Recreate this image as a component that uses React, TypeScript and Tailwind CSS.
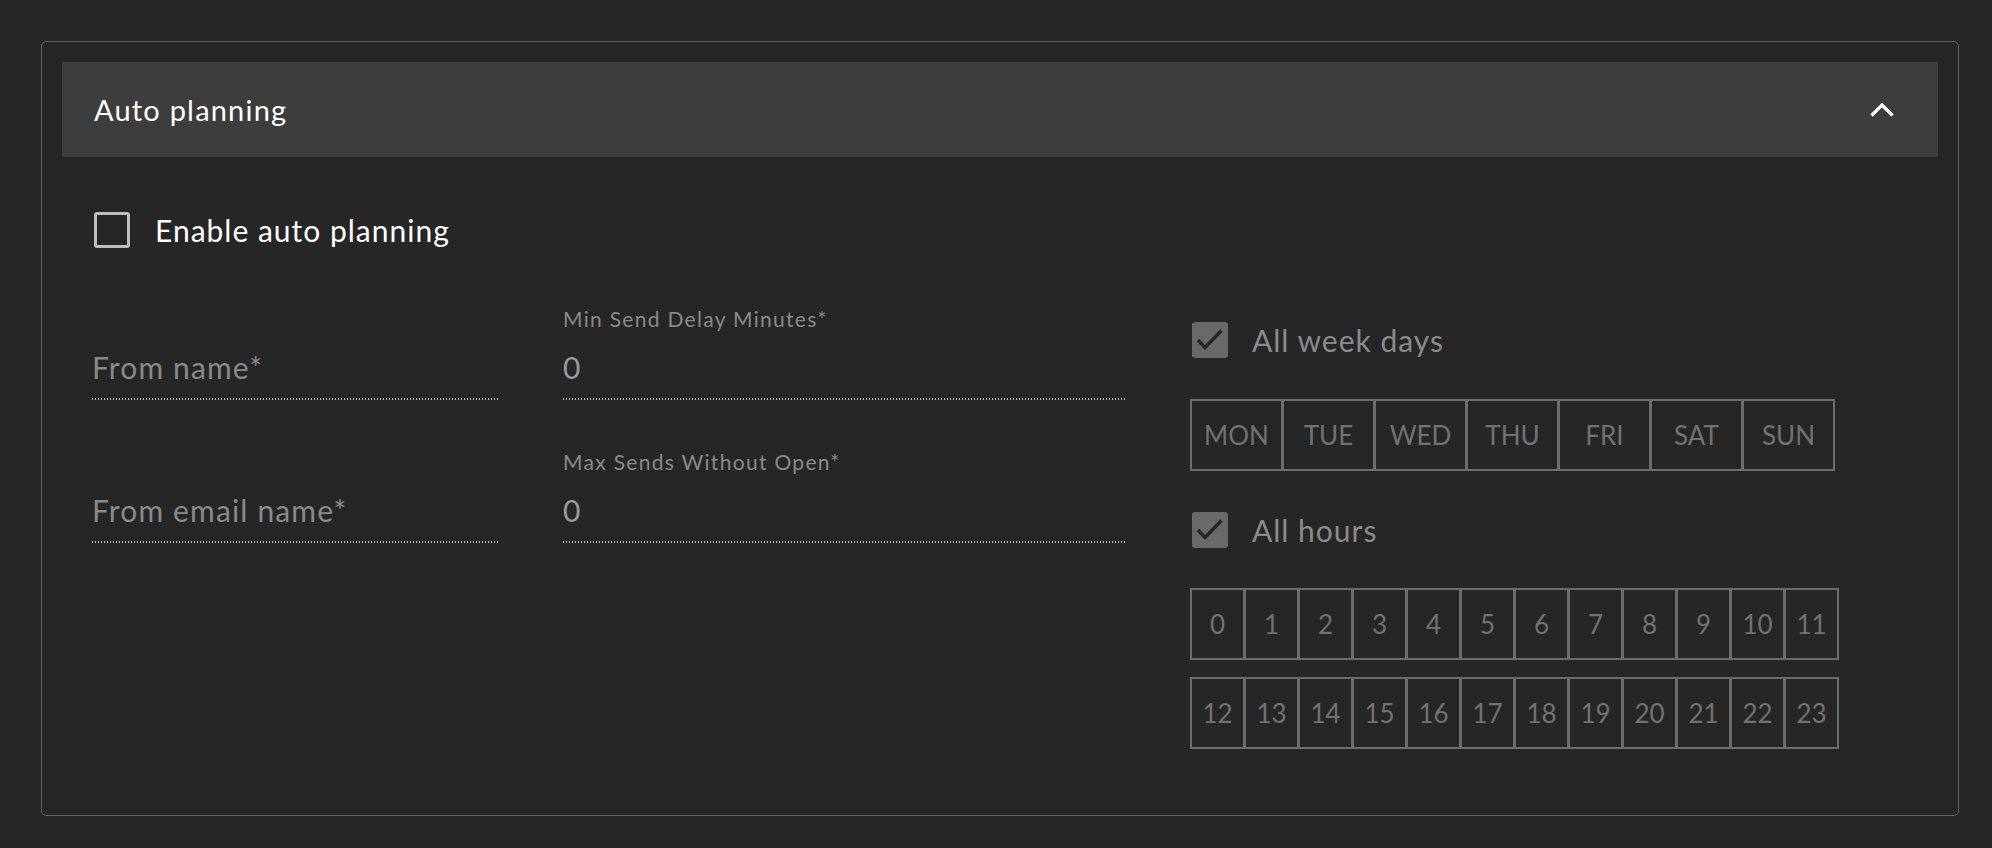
import React from "react";

const FONT = { fontFamily: "Lato, 'Open Sans', sans-serif" };

function Field({ label, value, placeholder }: { label?: string; value?: string; placeholder?: string }) {
  return (
    <div className="flex flex-col">
      <div className="h-[24px] text-[21px] leading-[24px] tracking-[1.3px] text-[#8a8a8a] whitespace-nowrap">{label ?? ""}</div>
      <div
        className={
          "mt-[21px] h-[30px] text-[30px] leading-[30px] tracking-[1.15px] whitespace-nowrap " +
          (value ? "text-[#9a9a9a]" : "text-[#8a8a8a]")
        }
      >
        {value ?? placeholder}
      </div>
      <div className="mt-[16px] h-[2px] w-full bg-[repeating-linear-gradient(90deg,#bdbdbd_0px,#bdbdbd_1px,transparent_1px,transparent_3px)]" />
    </div>
  );
}

function CheckedBox() {
  return (
    <div className="w-[36px] h-[36px] rounded-[3px] bg-[#696969] flex items-center justify-center shrink-0">
      <svg width="36" height="36" viewBox="0 0 36 36">
        <polyline points="6,18 13,25.5 29.5,8.5" fill="none" stroke="#262626" strokeWidth="3.4" />
      </svg>
    </div>
  );
}

export default function App() {
  const days = ["MON", "TUE", "WED", "THU", "FRI", "SAT", "SUN"];
  const row1 = Array.from({ length: 12 }, (_, i) => i);
  const row2 = Array.from({ length: 12 }, (_, i) => i + 12);
  return (
    <div className="w-[1992px] h-[848px] bg-[#262626] pt-[41px] pl-[41px]" style={FONT}>
      <div className="w-[1918px] h-[775px] border border-[#646464] rounded-[5px] p-[20px]">
        <div className="h-[95px] bg-[#3d3d3d] flex items-center justify-between pl-[32px] pr-[44px]">
          <span className="text-[29px] tracking-[1.2px] text-white leading-none">Auto planning</span>
          <svg width="24" height="15" viewBox="0 0 24 15">
            <polyline points="1.5,13.5 12,3 22.5,13.5" fill="none" stroke="#ffffff" strokeWidth="3.2" />
          </svg>
        </div>

        <div className="pl-[30px]">
          <div className="mt-[55px] ml-[2px] flex items-center h-[36px]">
            <div className="w-[36px] h-[36px] rounded-[3px] border-[3px] border-[#bdbdbd] shrink-0" />
            <span className="ml-[25px] text-[30px] tracking-[1px] leading-none text-white">Enable auto planning</span>
          </div>

          <div className="mt-[59px] flex">
            <div className="w-[406px] flex flex-col gap-[50px]">
              <Field placeholder="From name*" />
              <Field placeholder="From email name*" />
            </div>
            <div className="ml-[65px] w-[562px] flex flex-col gap-[50px]">
              <Field label="Min Send Delay Minutes*" value="0" />
              <Field label="Max Sends Without Open*" value="0" />
            </div>
            <div className="ml-[65px] pt-[15px] flex flex-col">
              <div className="flex items-center h-[36px] ml-[2px]">
                <CheckedBox />
                <span className="ml-[24px] text-[30px] tracking-[1px] leading-none text-[#8b8b8b]">All week days</span>
              </div>
              <div className="mt-[41px] flex">
                {days.map((d, i) => (
                  <div
                    key={d}
                    className={
                      "w-[93px] h-[72px] border-2 border-[#6c6c6c] flex items-center justify-center text-[26px] text-[#727272] " +
                      (i > 0 ? "-ml-[1px]" : "")
                    }
                  >
                    {d}
                  </div>
                ))}
              </div>
              <div className="mt-[41px] flex items-center h-[36px] ml-[2px]">
                <CheckedBox />
                <span className="ml-[24px] text-[30px] tracking-[1px] leading-none text-[#8b8b8b]">All hours</span>
              </div>
              <div className="mt-[40px] flex">
                {row1.map((h) => (
                  <div
                    key={h}
                    className={
                      "w-[55px] h-[72px] border-2 border-[#6c6c6c] flex items-center justify-center text-[26px] text-[#727272] " +
                      (h > 0 ? "-ml-[1px]" : "")
                    }
                  >
                    {h}
                  </div>
                ))}
              </div>
              <div className="mt-[17px] flex">
                {row2.map((h) => (
                  <div
                    key={h}
                    className={
                      "w-[55px] h-[72px] border-2 border-[#6c6c6c] flex items-center justify-center text-[26px] text-[#727272] " +
                      (h > 12 ? "-ml-[1px]" : "")
                    }
                  >
                    {h}
                  </div>
                ))}
              </div>
            </div>
          </div>
        </div>
      </div>
    </div>
  );
}
